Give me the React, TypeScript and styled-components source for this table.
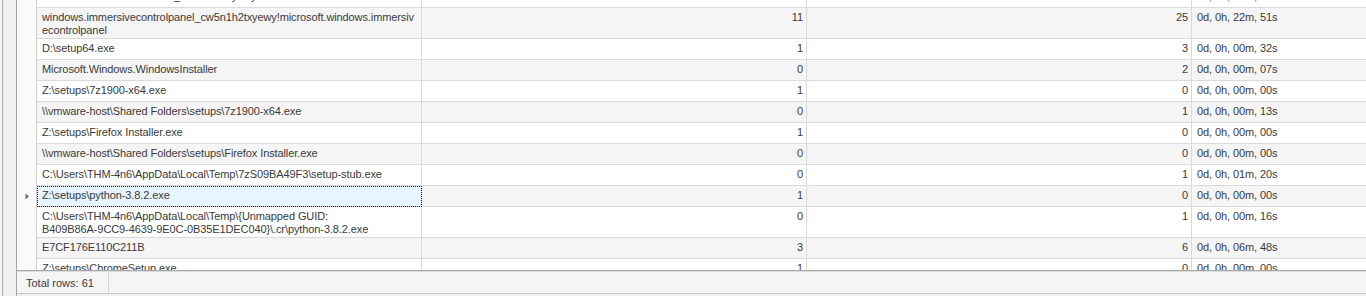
import React from "react";
import styled, { createGlobalStyle } from "styled-components";

/* type */
interface Entry {
  path: string;
  launches: number;
  total: number;
  time: string;
}

/* data */
const entries: Entry[] = [
  { path: "Microsoft.Windows.Cortana_cw5n1h2txyewy!CortanaUI", launches: 2, total: 4, time: "0d, 0h, 00m, 09s" },
  { path: "windows.immersivecontrolpanel_cw5n1h2txyewy!microsoft.windows.immersivecontrolpanel", launches: 11, total: 25, time: "0d, 0h, 22m, 51s" },
  { path: "D:\\setup64.exe", launches: 1, total: 3, time: "0d, 0h, 00m, 32s" },
  { path: "Microsoft.Windows.WindowsInstaller", launches: 0, total: 2, time: "0d, 0h, 00m, 07s" },
  { path: "Z:\\setups\\7z1900-x64.exe", launches: 1, total: 0, time: "0d, 0h, 00m, 00s" },
  { path: "\\\\vmware-host\\Shared Folders\\setups\\7z1900-x64.exe", launches: 0, total: 1, time: "0d, 0h, 00m, 13s" },
  { path: "Z:\\setups\\Firefox Installer.exe", launches: 1, total: 0, time: "0d, 0h, 00m, 00s" },
  { path: "\\\\vmware-host\\Shared Folders\\setups\\Firefox Installer.exe", launches: 0, total: 0, time: "0d, 0h, 00m, 00s" },
  { path: "C:\\Users\\THM-4n6\\AppData\\Local\\Temp\\7zS09BA49F3\\setup-stub.exe", launches: 0, total: 1, time: "0d, 0h, 01m, 20s" },
  { path: "Z:\\setups\\python-3.8.2.exe", launches: 1, total: 0, time: "0d, 0h, 00m, 00s" },
  { path: "C:\\Users\\THM-4n6\\AppData\\Local\\Temp\\{Unmapped GUID: B409B86A-9CC9-4639-9E0C-0B35E1DEC040}\\.cr\\python-3.8.2.exe", launches: 0, total: 1, time: "0d, 0h, 00m, 16s" },
  { path: "E7CF176E110C211B", launches: 3, total: 6, time: "0d, 0h, 06m, 48s" },
  { path: "Z:\\setups\\ChromeSetup.exe", launches: 1, total: 0, time: "0d, 0h, 00m, 00s" },
];

const SELECTED = 9;

/* style */
const GlobalStyle = createGlobalStyle`
  html, body {
    margin: 0;
    padding: 0;
    background: #f0f0f0;
  }
  body {
    font-family: "Liberation Sans", Arial, sans-serif;
  }
`;

const Window = styled.div`
  display: flex;
  width: 1366px;
  height: 296px;
  overflow: hidden;
  background: #f0f0f0;
`;

const OuterEdge = styled.div`
  width: 2px;
  background: #f8f8f8;
  border-right: 1px solid #a9a9a9;
`;

const Gutter = styled.div`
  width: 13px;
  background: #f0f0f0;
`;

const Panel = styled.div`
  flex: 1;
  min-width: 0;
  display: flex;
  flex-direction: column;
  border-left: 1px solid #a3a3a3;
`;

const GridBody = styled.div`
  height: 270px;
  overflow: hidden;
  background: #ffffff;
  border-bottom: 1px solid #a8a8a8;
`;

const Rows = styled.div`
  display: flex;
  flex-direction: column;
  margin-top: -13px;
`;

const Row = styled.div<{ $alt: boolean }>`
  display: grid;
  grid-template-columns: 20px 385px 385px 385px 1fr;
  background: ${(p) => (p.$alt ? "#f5f5f5" : "#ffffff")};
  color: #3a3a3a;
  font-size: 11px;
  line-height: 13px;
  letter-spacing: -0.1px;
`;

const Indicator = styled.div`
  display: flex;
  align-items: center;
  justify-content: center;
  padding-left: 1px;
  background: #fafafa;
  border-right: 1px solid #cfcfcf;
`;

const Cell = styled.div<{ $align?: "left" | "right"; $selected?: boolean }>`
  min-height: 21px;
  box-sizing: border-box;
  padding: 3px 3px 1px 5px;
  text-align: ${(p) => p.$align ?? "left"};
  border-right: 1px solid #dadada;
  border-bottom: 1px solid #dadada;
  ${(p) =>
    p.$selected &&
    `
    background: #e6f5fe;
    outline: 1px dotted #1a1a1a;
    outline-offset: -1px;
  `}
  &:last-child {
    border-right: none;
  }
`;

const PathCell = styled(Cell)`
  padding-right: 1px;
`;

const Word = styled.span<{ $long: boolean }>`
  white-space: ${(p) => (p.$long ? "normal" : "nowrap")};
  word-break: ${(p) => (p.$long ? "break-all" : "normal")};
`;

const Footer = styled.div`
  display: flex;
  height: 21px;
  background: #f5f5f5;
  border-top: 1px solid #dcdcdc;
  border-bottom: 1px solid #c6c6c6;
  font-size: 11px;
  color: #3a3a3a;
`;

const FooterCell = styled.div`
  width: 82px;
  padding-left: 9px;
  display: flex;
  align-items: center;
  border-right: 1px solid #d4d4d4;
`;

/* DOM */
const Arrow: React.FC = () => (
  <svg width="5" height="7" viewBox="0 0 5 7">
    <path d="M0.5 0.5 L4 3.5 L0.5 6.5 Z" fill="#707070" />
  </svg>
);

const PathText: React.FC<{ path: string }> = ({ path }) => (
  <>
    {path.split(" ").map((w, i) => (
      <React.Fragment key={i}>
        {i > 0 && " "}
        <Word $long={w.length > 60}>{w}</Word>
      </React.Fragment>
    ))}
  </>
);

const App: React.FC = (): JSX.Element => {
  return (
    <>
      <GlobalStyle />
      <Window>
        <OuterEdge />
        <Gutter />
        <Panel>
          <GridBody>
            <Rows>
              {entries.map((e, i) => (
                <Row key={i} $alt={i % 2 === 1}>
                  <Indicator>{i === SELECTED && <Arrow />}</Indicator>
                  <PathCell $selected={i === SELECTED}>
                    <PathText path={e.path} />
                  </PathCell>
                  <Cell $align="right">{e.launches}</Cell>
                  <Cell $align="right">{e.total}</Cell>
                  <Cell>{e.time}</Cell>
                </Row>
              ))}
            </Rows>
          </GridBody>
          <Footer>
            <FooterCell>Total rows: 61</FooterCell>
          </Footer>
        </Panel>
      </Window>
    </>
  );
};

export default App;
